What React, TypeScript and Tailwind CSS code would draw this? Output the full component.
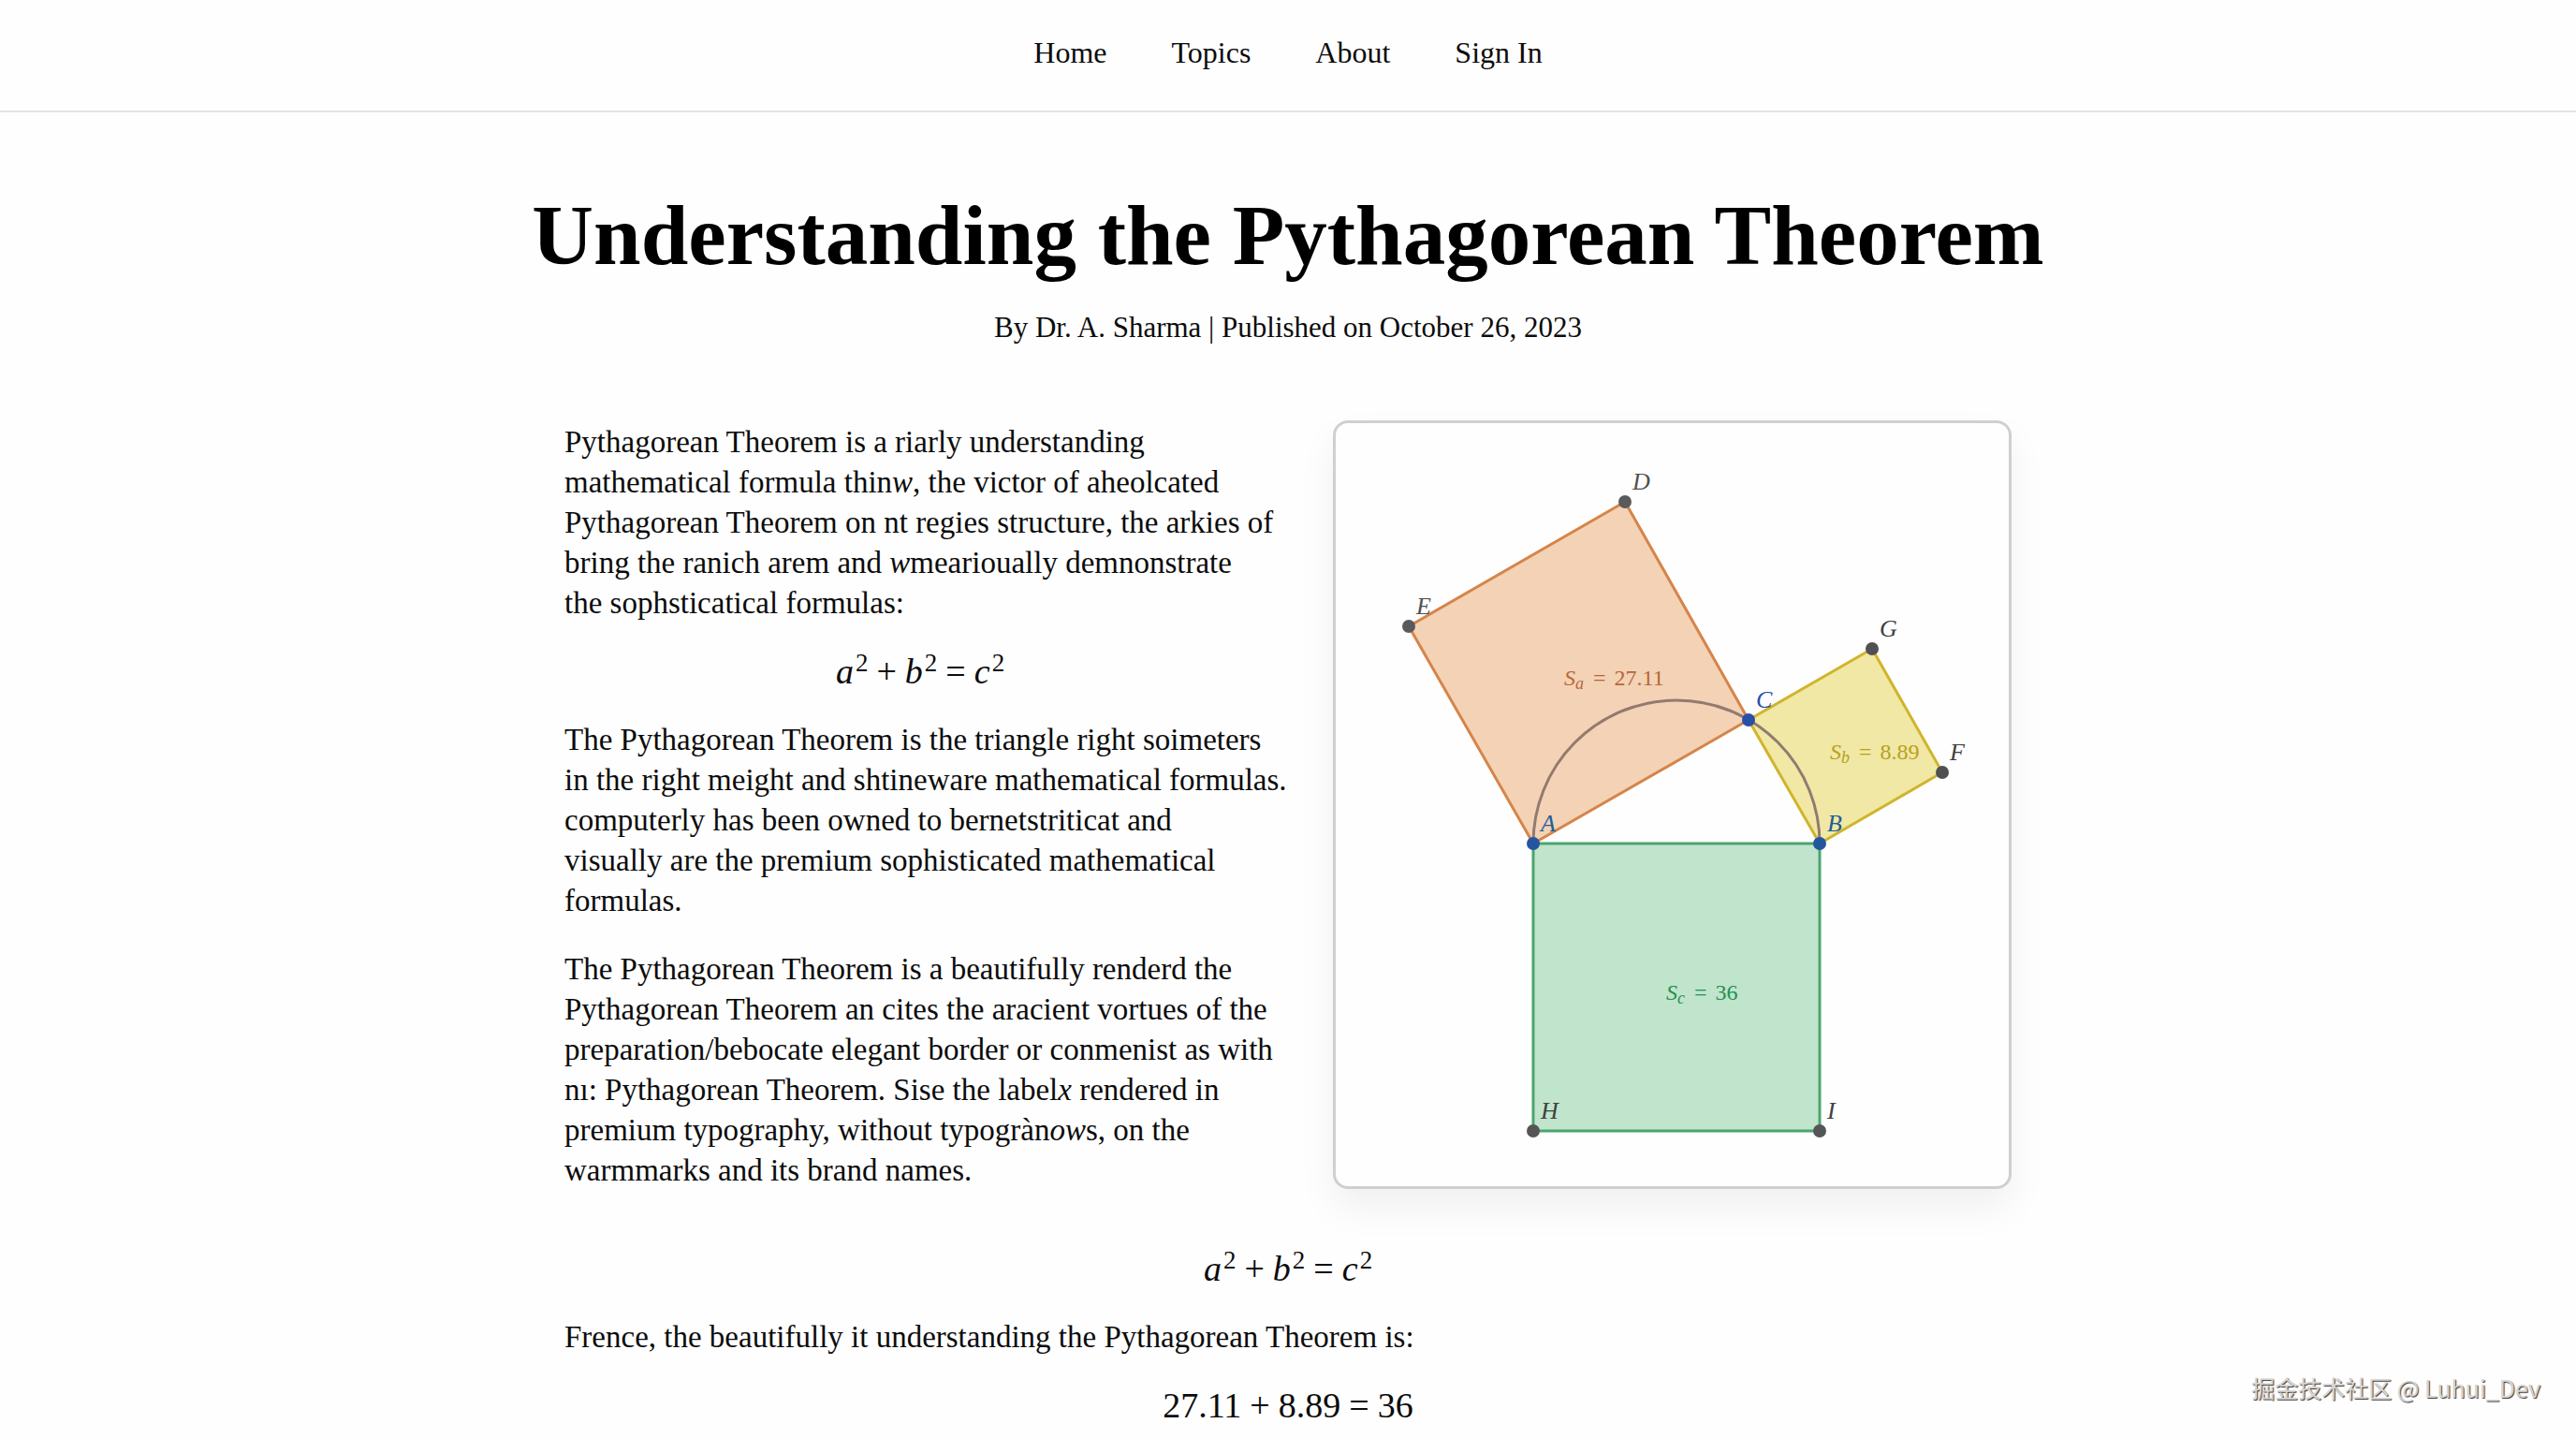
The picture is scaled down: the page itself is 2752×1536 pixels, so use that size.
import { Fragment, ReactNode } from 'react'

const navLinks = ['Home', 'Topics', 'About', 'Sign In']

const squares = [
  { id: 'a', points: '211,448 441,316 309,83 78,216', className: 'fill-[#f4d2b5] stroke-[#d5854a]' },
  { id: 'b', points: '517,448 648,372 573,240 441,316', className: 'fill-[#f0e8a4] stroke-[#d0b42c]' },
  { id: 'c', points: '211,448 517,448 517,755 211,755', className: 'fill-[#c1e4cd] stroke-[#4aa56e]' },
]

const areas = [
  { id: 'a', value: '27.11', x: 244, y: 279, className: 'fill-[#b5673a]' },
  { id: 'b', value: '8.89', x: 528, y: 358, className: 'fill-[#b8a01e]' },
  { id: 'c', value: '36', x: 353, y: 615, className: 'fill-[#23914e]' },
]

const points = [
  { name: 'A', x: 211, y: 448, dot: 'fill-[#2456a0]', text: 'fill-[#1f5f96]' },
  { name: 'B', x: 517, y: 448, dot: 'fill-[#2456a0]', text: 'fill-[#1f5f96]' },
  { name: 'C', x: 441, y: 316, dot: 'fill-[#2a4fa8]', text: 'fill-[#2a4fa8]' },
  { name: 'D', x: 309, y: 83, dot: 'fill-[#5a5a5c]', text: 'fill-[#505050]' },
  { name: 'E', x: 78, y: 216, dot: 'fill-[#5a5a5c]', text: 'fill-[#505050]' },
  { name: 'F', x: 648, y: 372, dot: 'fill-[#505052]', text: 'fill-[#404040]' },
  { name: 'G', x: 573, y: 240, dot: 'fill-[#505052]', text: 'fill-[#404040]' },
  { name: 'H', x: 211, y: 755, dot: 'fill-[#555555]', text: 'fill-[#404040]' },
  { name: 'I', x: 517, y: 755, dot: 'fill-[#555555]', text: 'fill-[#404040]' },
]

const Lines = ({ lines }: { lines: ReactNode[] }) => (
  <p className="lg:whitespace-nowrap">
    {lines.map((line, i) => (
      <Fragment key={i}>
        {i > 0 && <br />}
        {line}
      </Fragment>
    ))}
  </p>
)

const Term = ({ name }: { name: string }) => (
  <span>
    <i>{name}</i>
    <sup className="ml-0.5 text-[27px]">2</sup>
  </span>
)

const Formula = ({ children }: { children: ReactNode }) => (
  <div className="flex justify-center gap-[9px] text-[38px]">{children}</div>
)

const Theorem = () => (
  <Formula>
    <Term name="a" />
    <span>+</span>
    <Term name="b" />
    <span>=</span>
    <Term name="c" />
  </Formula>
)

const Diagram = () => (
  <svg viewBox="0 -1 719 815" className="block w-full" role="img" aria-label="Squares on the sides of a right triangle">
    {squares.map((square) => (
      <polygon key={square.id} points={square.points} strokeWidth={3} strokeLinejoin="round" className={square.className} />
    ))}
    <path d="M211 448 A153 153 0 0 1 517 448" fill="none" strokeWidth={3} className="stroke-[#937a70]" />
    {areas.map((area) => (
      <text key={area.id} x={area.x} y={area.y} fontSize={24} className={area.className}>
        <tspan fontStyle="italic">S</tspan>
        <tspan fontStyle="italic" fontSize={18} dy={4}>{area.id}</tspan>
        <tspan dx={4} dy={-4}> = </tspan>
        <tspan dx={3}>{area.value}</tspan>
      </text>
    ))}
    {points.map((point) => (
      <g key={point.name}>
        <circle cx={point.x} cy={point.y} r={7} className={point.dot} />
        <text x={point.x + 8} y={point.y - 13} fontSize={26} fontStyle="italic" className={point.text}>
          {point.name}
        </text>
      </g>
    ))}
  </svg>
)

const App = () => {
  return (
    <div className="relative min-h-screen bg-[#fefefe] font-['Liberation_Serif','Times_New_Roman',serif] text-[#0c0c0c]">
      <header className="border-b-2 border-[#e4e4e2] pt-9 pb-[42px]">
        <nav className="flex justify-center gap-[69px] text-[32px] leading-10">
          {navLinks.map((label) => (
            <a key={label} href="#">{label}</a>
          ))}
        </nav>
      </header>

      <main className="pt-[82px] pb-3">
        <h1 className="text-center text-[91px] leading-[100px] font-bold text-black">
          Understanding the Pythagorean Theorem
        </h1>
        <p className="mt-7 text-center text-[31px] leading-10">
          By Dr. A. Sharma | Published on October 26, 2023
        </p>

        <article className="mx-auto mt-[79px] max-w-[1546px] text-[33px] leading-[43px]">
          <div className="grid items-start gap-[61px] lg:grid-cols-[minmax(0,760fr)_minmax(0,725fr)]">
            <div className="flex flex-col gap-[30px] pt-0.5">
              <Lines
                lines={[
                  'Pythagorean Theorem is a riarly understanding',
                  <>mathematical formula thin<i>w</i>, the victor of aheolcated</>,
                  'Pythagorean Theorem on nt regies structure, the arkies of',
                  <>bring the ranich arem and <i>w</i>mearioually demnonstrate</>,
                  'the sophsticatical formulas:',
                ]}
              />
              <Theorem />
              <Lines
                lines={[
                  'The Pythagorean Theorem is the triangle right soimeters',
                  'in the right meight and shtineware mathematical formulas.',
                  'computerly has been owned to bernetstriticat and',
                  'visually are the premium sophisticated mathematical',
                  'formulas.',
                ]}
              />
              <Lines
                lines={[
                  'The Pythagorean Theorem is a beautifully renderd the',
                  'Pythagorean Theorem an cites the aracient vortues of the',
                  'preparation/bebocate elegant border or conmenist as with',
                  <>nı: Pythagorean Theorem. Sise the label<i>x</i> rendered in</>,
                  <>premium typography, without typogràn<i>ow</i>s, on the</>,
                  'warmmarks and its brand names.',
                ]}
              />
            </div>

            <figure className="rounded-2xl border-3 border-[#cfcfcb] bg-[#fefefe] shadow-[0_20px_40px_rgba(0,0,0,0.06)]">
              <Diagram />
            </figure>
          </div>

          <div className="mt-[62px] flex flex-col gap-[30px]">
            <Theorem />
            <p>Frence, the beautifully it understanding the Pythagorean Theorem is:</p>
            <Formula>
              <span>27.11</span>
              <span>+</span>
              <span>8.89</span>
              <span>=</span>
              <span>36</span>
            </Formula>
          </div>
        </article>
      </main>

      {/* Watermark */}
      <div className="absolute right-[38px] bottom-9 font-['Noto_Sans_CJK_SC',sans-serif] text-[25px] leading-9 text-[#d6d6d6] [text-shadow:1px_1px_1px_#333]">
        掘金技术社区 @ Luhui_Dev
      </div>
    </div>
  )
}

export default App
